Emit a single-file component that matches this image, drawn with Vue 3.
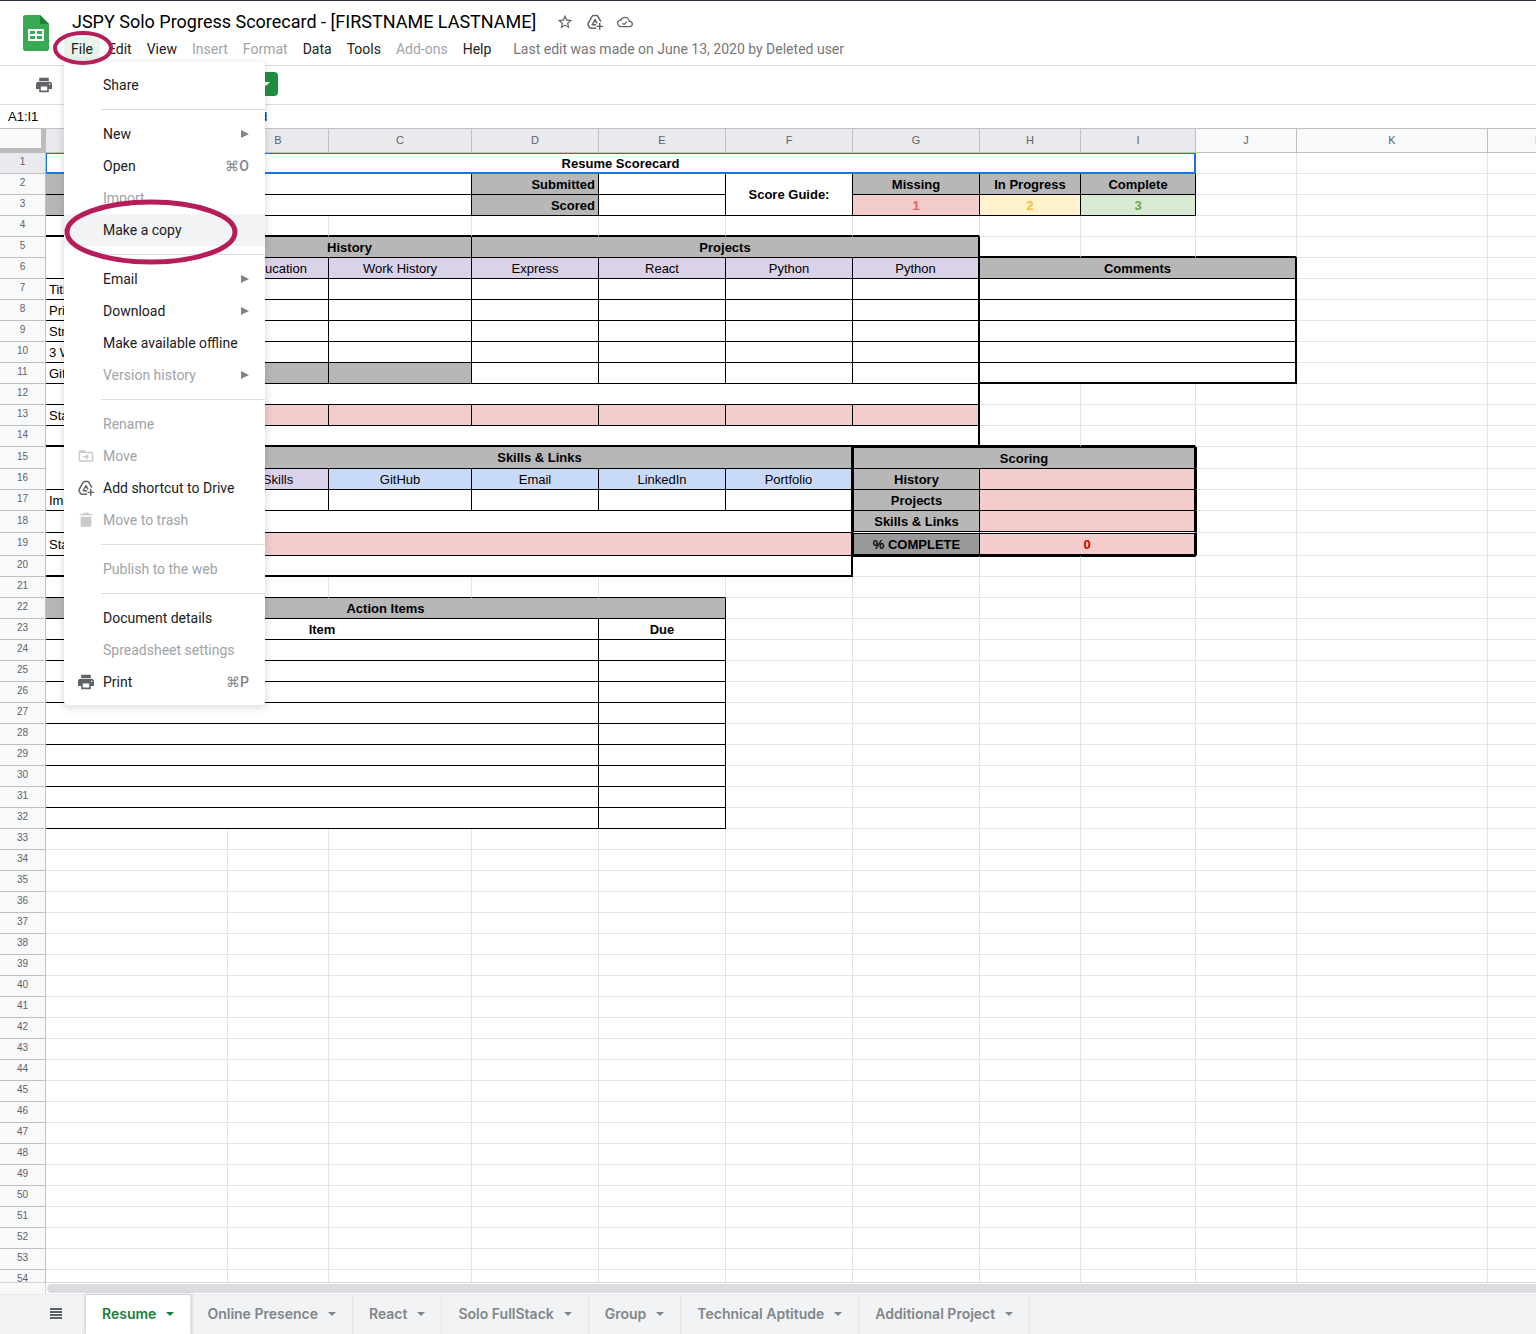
<script setup>
import { ref } from 'vue'

const columns = [
  ['A', 182], ['B', 101], ['C', 143], ['D', 127], ['E', 127], ['F', 127],
  ['G', 127], ['H', 101], ['I', 115], ['J', 101], ['K', 191], ['L', 101],
].map(([name, width], i) => ({ name, width, selected: i < 9 }))

const rowCount = 54
const rowClass = { 15: 'tall', 18: 'tall', 19: 'taller' }

// Cells that carry content, a fill, a border or a merge: address -> [colspan, class, text, rowspan]
const cells = {
  A1: [9, 'bold picked', 'Resume Scorecard'],
  A2: [1, 'bold right line gray', 'Name'],
  B2: [2, 'line'],
  D2: [1, 'bold right line gray', 'Submitted'],
  E2: [1, 'line'],
  F2: [1, 'bold line', 'Score Guide:', 2],
  G2: [1, 'bold line gray', 'Missing'],
  H2: [1, 'bold line gray', 'In Progress'],
  I2: [1, 'bold line gray', 'Complete'],
  A3: [1, 'bold right line gray', 'Cohort'],
  B3: [2, 'line'],
  D3: [1, 'bold right line gray', 'Scored'],
  E3: [1, 'line'],
  G3: [1, 'bold line pink low', '1'],
  H3: [1, 'bold line yellow mid', '2'],
  I3: [1, 'bold line green high', '3'],
  A5: [1, 'line', '', 2],
  B5: [2, 'bold line gray', 'History'],
  D5: [4, 'bold line gray edge-right', 'Projects'],
  B6: [1, 'line violet', 'Education'],
  C6: [1, 'line violet', 'Work History'],
  D6: [1, 'line violet', 'Express'],
  E6: [1, 'line violet', 'React'],
  F6: [1, 'line violet', 'Python'],
  G6: [1, 'line violet edge-right', 'Python'],
  H6: [3, 'bold line gray edge-right', 'Comments'],
  A12: [7, 'line edge-right'],
  A13: [1, 'left line', 'Status'],
  A14: [7, 'line edge-right edge-bottom'],
  H14: [1, 'edge-bottom'],
  I14: [1, 'edge-bottom'],
  A15: [1, 'line', '', 2],
  B15: [5, 'bold line gray edge-right', 'Skills & Links'],
  G15: [3, 'bold line gray rim-top rim-left edge-right', 'Scoring'],
  B16: [1, 'line violet', 'Skills'],
  C16: [1, 'line blue', 'GitHub'],
  D16: [1, 'line blue', 'Email'],
  E16: [1, 'line blue', 'LinkedIn'],
  F16: [1, 'line blue edge-right', 'Portfolio'],
  G16: [1, 'bold line gray rim-left', 'History'],
  H16: [2, 'line pink edge-right'],
  A17: [1, 'left line', 'Implemented'],
  F17: [1, 'line edge-right'],
  G17: [1, 'bold line gray rim-left', 'Projects'],
  H17: [2, 'line pink edge-right'],
  A18: [6, 'line edge-right'],
  G18: [1, 'bold line gray rim-left split', 'Skills & Links'],
  H18: [2, 'line pink edge-right split'],
  A19: [1, 'left line', 'Status'],
  B19: [5, 'line pink edge-right'],
  G19: [1, 'bold line dark rim-top rim-left edge-bottom', '% COMPLETE'],
  H19: [2, 'bold line pink total rim-top edge-right edge-bottom', '0'],
  A20: [6, 'line edge-right edge-bottom'],
  G20: [1, 'rim-top'],
  H20: [1, 'rim-top'],
  I20: [1, 'rim-top'],
  A22: [5, 'bold line gray', 'Action Items'],
  A23: [4, 'bold line', 'Item'],
  E23: [1, 'bold line', 'Due'],
}

const labels = { 7: 'Title', 8: 'Print', 9: 'Structure', 10: '3 Wins', 11: 'GitHub' }
for (let r = 7; r <= 11; r++) {
  cells['A' + r] = [1, 'left line', labels[r]]
  for (const c of 'BCDEFG') {
    const fill = r === 11 && (c === 'B' || c === 'C') ? ' gray' : ''
    cells[c + r] = [1, 'line' + fill + (c === 'G' ? ' edge-right' : '')]
  }
  cells['H' + r] = [3, 'line edge-right' + (r === 11 ? ' edge-bottom' : '')]
}
for (const c of 'BCDEFG') {
  cells[c + 4] = [1, 'edge-bottom']
  cells[c + 13] = [1, 'line pink' + (c === 'G' ? ' edge-right' : '')]
}
cells.A4 = [1, 'edge-bottom']
for (const c of 'HIJ') cells[c + 5] = [1, 'edge-bottom']
for (const c of 'BCDE') cells[c + 17] = [1, 'line']
for (const c of 'ABCDE') cells[c + 21] = [1, 'line-bottom']
for (let r = 15; r <= 19; r++) cells['J' + r] = [1, 'rim-left']
for (let r = 24; r <= 32; r++) {
  cells['A' + r] = [4, 'line']
  cells['E' + r] = [1, 'line']
}

const covered = new Set()
const rows = []
for (let r = 1; r <= rowCount; r++) {
  const list = []
  columns.forEach(({ name }, i) => {
    if (covered.has(name + r)) return
    const [span = 1, cls = '', text = '', rowspan = 1] = cells[name + r] || []
    for (let dr = 0; dr < rowspan; dr++) {
      for (let dc = 0; dc < span; dc++) covered.add(columns[i + dc].name + (r + dr))
    }
    list.push({ key: name + r, span, rowspan, cls, text })
  })
  rows.push({ number: r, list })
}

const menus = [
  { text: 'Edit' }, { text: 'View' }, { text: 'Insert', off: true }, { text: 'Format', off: true },
  { text: 'Data' }, { text: 'Tools' }, { text: 'Add-ons', off: true }, { text: 'Help' },
]

const fileMenu = [
  [{ text: 'Share' }],
  [{ text: 'New', sub: true }, { text: 'Open', key: '⌘O' }, { text: 'Import', off: true }, { text: 'Make a copy', hover: true }],
  [{ text: 'Email', sub: true }, { text: 'Download', sub: true }, { text: 'Make available offline' }, { text: 'Version history', sub: true, off: true }],
  [{ text: 'Rename', off: true }, { text: 'Move', off: true, icon: 'move' }, { text: 'Add shortcut to Drive', icon: 'drive' }, { text: 'Move to trash', off: true, icon: 'trash' }],
  [{ text: 'Publish to the web', off: true }],
  [{ text: 'Document details' }, { text: 'Spreadsheet settings', off: true }, { text: 'Print', key: '⌘P', icon: 'print' }],
]

const tabs = ['Resume', 'Online Presence', 'React', 'Solo FullStack', 'Group', 'Technical Aptitude', 'Additional Project']
const activeTab = ref('Resume')
const formula = ref('Resume Scorecard')
const range = ref('A1:I1')
</script>

<template>
  <div class="app">
    <svg class="symbols" aria-hidden="true">
      <symbol id="print" viewBox="0 0 24 24">
        <path d="M19 8H5c-1.66 0-3 1.34-3 3v6h4v4h12v-4h4v-6c0-1.66-1.34-3-3-3zm-3 11H8v-5h8v5zm3-7c-.55 0-1-.45-1-1s.45-1 1-1 1 .45 1 1-.45 1-1 1zm-1-9H6v4h12V3z" transform="translate(-2.4 -2.4) scale(1.2)" />
      </symbol>
      <symbol id="drive" viewBox="1 1 22 22">
        <g fill="none" stroke="currentColor" stroke-width="2" stroke-linejoin="round">
          <path d="M13.500 20.500H6.500q-1.500 0-2.200-1.200L2.600 16.300q-.7-1.200 0-2.400L8 4.200Q8.700 3 10 3h4q1.300 0 2 1.200l4 7.300" />
          <path d="M13.500 15.800H8.200l3.800-7 2.800 5" />
          <path d="M18.500 13.500v9M14 18h9" />
        </g>
      </symbol>
      <symbol id="trash" viewBox="0 0 24 24">
        <path d="M4 20c0 1.200.9 2 2 2h12c1.100 0 2-.8 2-2V7H4v13zM21.500 2.500H16l-1.200-1.500H9.200L8 2.500H2.500V5h19z" />
      </symbol>
      <symbol id="move" viewBox="1 1 22 22">
        <path d="M20 6h-8l-2-2H4c-1.100 0-2 .9-2 2v12c0 1.100.9 2 2 2h16c1.100 0 2-.9 2-2V8c0-1.100-.9-2-2-2zm0 12H4V8h16v10zm-8-1l4-4-4-4v3H8v2h4z" />
      </symbol>
    </svg>

    <header class="top">
      <svg class="logo" viewBox="0 0 26 36" role="img" aria-label="Sheets">
        <path fill="#3aa956" d="M2.500 0H17l9 9v24.500a2.500 2.500 0 0 1-2.500 2.500h-21A2.500 2.500 0 0 1 0 33.500v-31A2.500 2.500 0 0 1 2.500 0z" />
        <path fill="#1e8138" d="M17 0l9 9h-9z" />
        <path fill="#fff" fill-rule="evenodd" d="M5 14h16v12H5zM7 16v3h5v-3zM14 16v3h5v-3zM7 21v3h5v-3zM14 21v3h5v-3z" />
      </svg>
      <div class="heading">
        <div class="title-row">
          <h1>JSPY Solo Progress Scorecard - [FIRSTNAME LASTNAME]</h1>
          <button class="icon" aria-label="Star">
            <svg viewBox="1 1 22 22"><path d="M22 9.240l-7.190-.62L12 2 9.190 8.630 2 9.240l5.460 4.730L5.820 21 12 17.270 18.180 21l-1.630-7.030L22 9.240zM12 15.400l-3.760 2.270 1-4.280-3.320-2.880 4.380-.38L12 6.100l1.710 4.040 4.380.38-3.320 2.880 1 4.280L12 15.400z" /></svg>
          </button>
          <button class="icon" aria-label="Add shortcut to Drive"><svg><use href="#drive" /></svg></button>
          <button class="icon" aria-label="Document status">
            <svg viewBox="0 0 24 24"><path d="M19.350 10.040C18.670 6.590 15.640 4 12 4 9.110 4 6.600 5.640 5.350 8.040 2.340 8.360 0 10.910 0 14c0 3.310 2.690 6 6 6h13c2.760 0 5-2.240 5-5 0-2.640-2.050-4.780-4.650-4.960zM19 18H6c-2.210 0-4-1.790-4-4 0-2.050 1.530-3.760 3.560-3.970l1.070-.11.5-.95C8.080 7.140 9.940 6 12 6c2.620 0 4.880 1.860 5.390 4.430l.3 1.500 1.530.11c1.560.1 2.780 1.410 2.780 2.960 0 1.650-1.350 3-3 3zm-8.500-3.300l-1.600-1.600L7.700 14.300 10.500 17l4.800-4.800-1.200-1.200z" /></svg>
          </button>
        </div>
        <nav class="menubar">
          <div class="file">
            <button class="menu open">File</button>
            <div class="dropdown">
              <div v-for="(group, g) in fileMenu" :key="g" class="group">
                <button v-for="item in group" :key="item.text" class="item" :class="{ off: item.off, hover: item.hover }">
                  <span class="slot"><svg v-if="item.icon"><use :href="'#' + item.icon" /></svg></span>
                  <span class="label">{{ item.text }}</span>
                  <span v-if="item.sub" class="arrow"></span>
                  <span v-if="item.key" class="key">{{ item.key }}</span>
                  <svg v-if="item.hover" class="ring wide" viewBox="0 0 174 66"><ellipse cx="87" cy="33" rx="84" ry="30" stroke-width="5" /></svg>
                </button>
              </div>
            </div>
            <svg class="ring small" viewBox="0 0 60 34"><ellipse cx="30" cy="17" rx="28" ry="15" stroke-width="4" /></svg>
          </div>
          <button v-for="m in menus" :key="m.text" class="menu" :class="{ off: m.off }">{{ m.text }}</button>
          <a class="edited" href="#">Last edit was made on June 13, 2020 by Deleted user</a>
        </nav>
      </div>
    </header>

    <div class="toolbar">
      <button class="icon print" aria-label="Print"><svg><use href="#print" /></svg></button>
      <button class="view-mode" aria-label="View only"><span class="caret"></span></button>
    </div>

    <div class="formula-bar">
      <input v-model="range" class="range" aria-label="Name box" />
      <input v-model="formula" class="formula" aria-label="Formula" />
    </div>

    <main class="sheet">
      <table>
        <colgroup>
          <col class="numbers" />
          <col v-for="c in columns" :key="c.name" :style="{ width: c.width + 'px' }" />
        </colgroup>
        <thead>
          <tr>
            <td class="corner"></td>
            <th v-for="c in columns" :key="c.name" scope="col" :class="{ selected: c.selected }">{{ c.name }}</th>
          </tr>
        </thead>
        <tbody>
          <tr v-for="row in rows" :key="row.number" :class="rowClass[row.number]">
            <th scope="row" :class="{ selected: row.number === 1 }">{{ row.number }}</th>
            <td v-for="cell in row.list" :key="cell.key" :colspan="cell.span" :rowspan="cell.rowspan" :class="cell.cls">{{ cell.text }}</td>
          </tr>
        </tbody>
      </table>
    </main>

    <div class="scroll"><div class="gutter"></div><div class="thumb"></div></div>

    <footer class="tabs">
      <button class="all" aria-label="All sheets"><i></i><i></i><i></i><i></i></button>
      <button v-for="t in tabs" :key="t" class="tab" :class="{ active: t === activeTab }" @click="activeTab = t">
        {{ t }}<span class="caret"></span>
      </button>
    </footer>
  </div>
</template>

<style>
body { margin: 0; }
</style>

<style scoped>
* { box-sizing: border-box; }
.app {
  display: flex;
  flex-direction: column;
  height: 100vh;
  overflow: hidden;
  background: #fff;
  color: #000;
  font-family: Roboto, "Liberation Sans", sans-serif;
}
button, input {
  border: 0;
  padding: 0;
  background: none;
  font: inherit;
  color: inherit;
}
svg { display: block; fill: currentColor; }
.symbols { position: absolute; width: 0; height: 0; }

.top {
  display: flex;
  flex: none;
  height: 66px;
  padding-left: 23px;
  border-top: 1px solid #2f2e41;
  border-bottom: 1px solid #dadce0;
}
.logo { width: 26px; height: 36px; margin-top: 14px; flex: none; }
.heading { padding-left: 15px; flex: 1; min-width: 0; }
.title-row { display: flex; align-items: center; height: 36px; padding: 6px 0 0 8px; }
h1 { margin: 0 21px 0 0; font-size: 18px; line-height: 24px; font-weight: 400; white-space: nowrap; }
.icon { width: 16px; height: 16px; color: #5f6368; }
.icon svg { width: 16px; height: 16px; }
.title-row .icon { margin-right: 14px; }

.menubar { display: flex; align-items: center; gap: 1px; height: 24px; font-size: 14px; white-space: nowrap; }
.menu { height: 24px; padding: 0 7px; color: #202124; }
.menu.off { color: #a0a4a8; }
.open { background: #e6f4ea; border-radius: 3px; }
.file { position: relative; }
.edited { margin-left: 14px; color: #777; text-decoration: none; }

.dropdown {
  position: absolute;
  z-index: 2;
  top: 25px;
  left: 0;
  width: 201px;
  padding: 7px 0;
  background: #fff;
  border-radius: 4px;
  box-shadow: 0 2px 6px 2px rgba(60, 64, 67, 0.15);
}
.group + .group::before {
  content: "";
  display: block;
  height: 1px;
  margin: 8px 0 8px 37px;
  background: #dadce0;
}
.item {
  position: relative;
  display: flex;
  align-items: center;
  width: 100%;
  height: 32px;
  padding-right: 16px;
  color: #202124;
  text-align: left;
}
.item.off { color: #a0a4a8; }
.item.hover { background: #f1f3f4; }
.slot { width: 39px; padding-left: 14px; color: #5f6368; flex: none; }
.slot svg { width: 16px; height: 16px; }
.off .slot { color: #c8cacc; }
.label { flex: 1; }
.key { color: #80868b; font-weight: 500; }
.arrow { border-left: 8px solid #80868b; border-top: 4px solid transparent; border-bottom: 4px solid transparent; }
.ring { position: absolute; z-index: 3; fill: none; stroke: #b81d5b; pointer-events: none; }
.ring.small { width: 60px; height: 34px; left: -11px; top: -6px; }
.ring.wide { width: 174px; height: 66px; left: 0; top: -15px; }

.toolbar {
  display: flex;
  flex: none;
  align-items: center;
  height: 39px;
  padding-left: 36px;
  border-bottom: 1px solid #dadce0;
}
.view-mode {
  display: flex;
  align-items: center;
  align-self: flex-start;
  justify-content: flex-end;
  width: 130px;
  height: 24px;
  margin: 6px 0 0 96px;
  padding-right: 8px;
  border-radius: 4px;
  background: #1e8e3e;
  color: #fff;
}
.caret { border-top: 4px solid currentColor; border-left: 4px solid transparent; border-right: 4px solid transparent; }

.formula-bar {
  display: flex;
  flex: none;
  height: 24px;
  border-bottom: 1px solid #c0c0c0;
  font-family: "Liberation Sans", Arial, sans-serif;
  font-size: 13px;
}
.range { width: 100px; padding-left: 8px; }
.formula { flex: 1; padding-left: 56px; }

.sheet {
  flex: 1;
  min-height: 0;
  overflow: hidden;
  border-bottom: 1px solid #d5d7d9;
  font-family: "Liberation Sans", Arial, sans-serif;
  font-size: 13px;
}
table { table-layout: fixed; width: 100%; border-collapse: separate; border-spacing: 0; }
.numbers { width: 46px; }
tr { height: 21px; }
tr.tall { height: 22px; }
tr.taller { height: 23px; }
thead tr { height: 24px; }
th {
  padding: 0 0 2px;
  border-right: 1px solid #c0c0c0;
  border-bottom: 1px solid #c0c0c0;
  background: #f8f9fa;
  color: #5f6368;
  font-size: 10px;
  line-height: 16px;
  font-weight: 400;
}
thead th { font-size: 11px; }
th.selected { background: #e8eaed; }
.corner { border-right: 5px solid #bcbcbc; border-bottom: 5px solid #bcbcbc; background: #f8f9fa; }
td {
  padding: 0 3px;
  border-right: 1px solid #e2e3e3;
  border-bottom: 1px solid #e2e3e3;
  line-height: 17px;
  text-align: center;
  white-space: nowrap;
  overflow: hidden;
}
.line { border-right-color: #000; border-bottom-color: #000; }
.line-bottom { border-bottom-color: #000; }
.edge-right { border-right: 2px solid #000; }
.edge-bottom { border-bottom: 2px solid #000; }
.rim-left { border-left: 1px solid #000; }
.rim-top { border-top: 1px solid #000; }
.split { border-bottom-color: #fff; box-shadow: inset 0 -1px #000; }
.picked { border: 1px solid #1a73e8; border-right-width: 2px; border-bottom-width: 2px; }
.bold { font-weight: 700; }
.left { text-align: left; }
.right { text-align: right; }
.gray { background: #b7b7b7; }
.dark { background: #999; }
.pink { background: #f4cccc; }
.yellow { background: #fff2cc; }
.green { background: #d9ead3; }
.violet { background: #d9d2e9; }
.blue { background: #c9daf8; }
.low { color: #e06666; }
.mid { color: #f1c232; }
.high { color: #6aa84f; }
.total { color: #c00; }

.scroll { display: flex; flex: none; height: 11px; }
.gutter { width: 46px; background: #f8f8f8; border-right: 1px solid #d5d7d9; }
.thumb { flex: 1; height: 9px; margin: 1px 0 0 1px; border-radius: 5px 0 0 5px; background: #dadce0; }

.tabs {
  display: flex;
  flex: none;
  height: 40px;
  border-top: 1px solid #e8eaed;
  background: #f1f3f4;
  color: #80868b;
  font-family: Inter, Roboto, sans-serif;
  font-size: 14px;
  font-weight: 600;
  white-space: nowrap;
}
.all { display: flex; flex-direction: column; gap: 1px; width: 86px; padding: 13px 0 0 50px; }
.all i { width: 12px; height: 2px; background: #5f6368; }
.tab {
  display: flex;
  align-items: center;
  gap: 10px;
  padding: 0 16px 2px;
  border-right: 1px solid #e4e6e8;
}
.tab.active { background: #fff; color: #188038; box-shadow: 0 0 3px 1px rgba(60, 64, 67, 0.2); }
</style>
